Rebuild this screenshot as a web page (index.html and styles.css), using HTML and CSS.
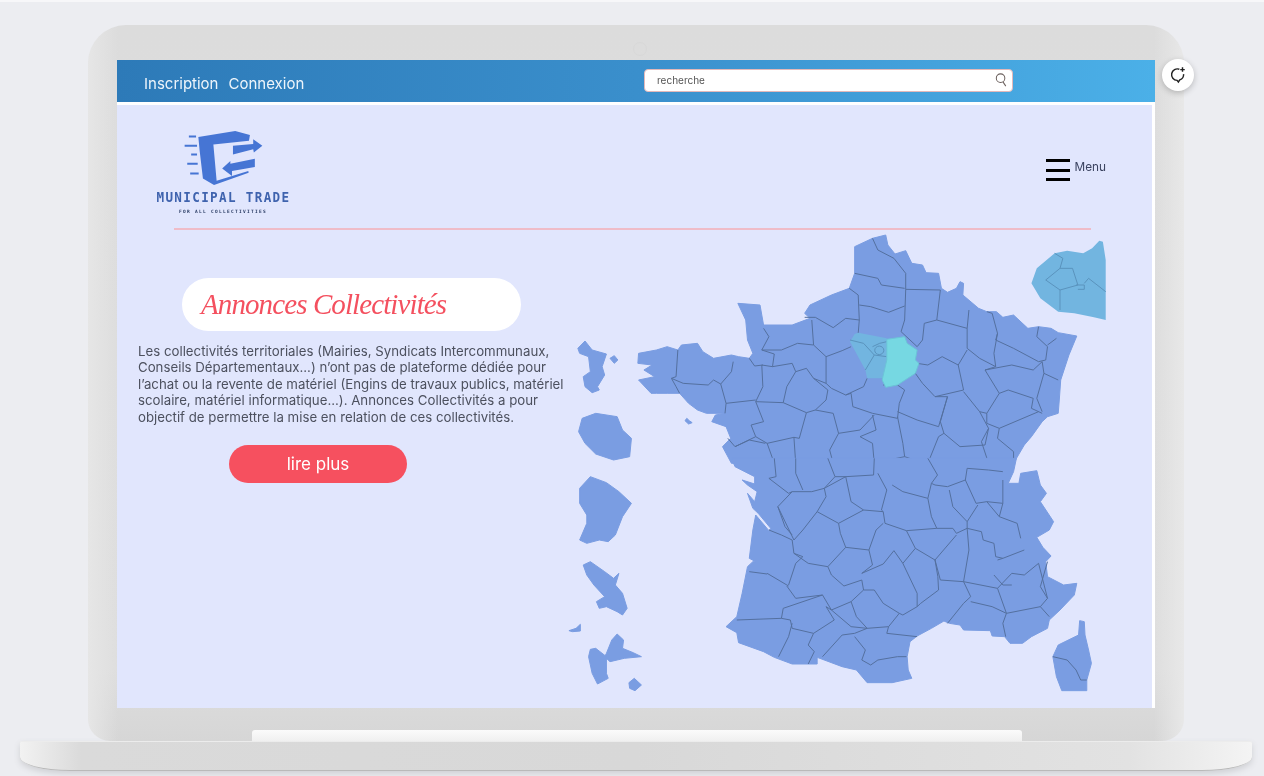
FILE: index.html
```html
<!DOCTYPE html>
<html lang="fr">
<head>
<meta charset="utf-8">
<title>Annonces Collectivités</title>
<link rel="stylesheet" href="styles.css">
</head>
<body>
<div class="lid">
  <span class="camera"></span>
  <div class="screen">
    <header class="topbar">
      <nav class="auth"><a>Inscription</a><a>Connexion</a></nav>
      <div class="search">
        <span>recherche</span>
        <svg class="search-icon" viewBox="0 0 14 16"><circle cx="6" cy="6" r="4.6"/><path d="M8.6 10l3 4.6"/></svg>
      </div>
    </header>
    <main class="page">
      <div class="brandrow">
        <div class="logo">
          <svg class="logo-icon" viewBox="185 235 245 172">
            <path class="logo-fill" d="M232 258L345 240L390 252L387 270L278 281L288 392L385 362L386 368L280 405L246 385L236 300Z"/>
            <path class="logo-fill" d="M338 285L400 280L400 265L428 285L402 306L400 296L338 312Z"/>
            <path class="logo-fill" d="M405 325L405 350L335 362L335 378L305 355L330 332L330 340Z"/>
            <path class="logo-lines" d="M203 257H225M190 285H228M210 312H228M198 340H230M207 370H233"/>
          </svg>
          <div class="logo-name">MUNICIPAL TRADE</div>
          <div class="logo-sub">FOR ALL COLLECTIVITIES</div>
        </div>
        <div class="menu">
          <span class="burger"><i></i><i></i><i></i></span>
          <span class="menu-label">Menu</span>
        </div>
      </div>
      <div class="rule"></div>
      <div class="content">
        <section class="intro">
          <h1 class="title">Annonces Collectivités</h1>
          <p class="text">Les collectivités territoriales (Mairies, Syndicats Intercommunaux,<br>Conseils Départementaux...) n’ont pas de plateforme dédiée pour<br>l’achat ou la revente de matériel (Engins de travaux publics, matériel<br>scolaire, matériel informatique...). Annonces Collectivités a pour<br>objectif de permettre la mise en relation de ces collectivités.</p>
          <a class="more">lire plus</a>
        </section>
        <svg class="map" viewBox="0 0 1568 1434" preserveAspectRatio="none">
          <!-- north half, traced in crop coordinates -->
          <path class="dep" d="M875 25L912 15L918 45L938 72L968 62L985 100L1015 105L1025 128L1060 130L1068 175L1085 187L1110 175L1120 155L1130 160L1128 195L1172 235L1195 245L1222 245L1240 262L1270 255L1310 295L1340 290L1375 295L1395 308L1447 318L1425 375L1402 450L1398 510L1395 550L1365 560L1350 575L1320 620L1300 645L1270 700L480 700L455 650L478 625L465 590L425 575L435 555L462 550L410 550L385 540L360 520L335 490L300 490L270 490L255 490L220 450L265 440L235 420L258 405L218 400L220 370L270 360L300 350L330 360L340 345L385 340L400 365L430 385L480 375L500 380L530 385L540 370L525 330L520 270L498 220L560 225L570 285L650 285L700 265L685 250L700 225L760 195L810 175L825 130L825 50Z"/>
          <path class="dep" d="M355 565L362 572L370 578L360 582L350 572Z"/>
          <path class="dep" d="M50 355L70 333L90 360L130 372L118 410L125 435L105 470L110 480L90 488L70 470L65 440L85 425L80 380L55 370Z"/>
          <path class="dep" d="M140 385L152 377L162 390L152 400Z"/>
          <path class="dep" d="M62 565L100 550L160 560L175 600L200 625L195 680L150 690L100 672L70 640L52 605Z"/>
          <path class="borders" d="M875 25L890 60L935 85L968 130L968 178L965 270L955 305L1000 350M825 130L890 145L900 165L965 175M838 225L870 230L920 247L965 228M810 175L835 195L838 270L835 310M968 178L1065 180L1055 270L1020 280L1015 330L1000 350M685 262L715 262L765 293L800 265L838 270M705 270L710 345L745 380L790 362L815 350M570 295L585 320L565 360L620 360L665 340L710 345M565 360L600 372L595 410L650 400L660 425L690 415L710 445L745 460L745 380M595 410L565 405L568 470L548 515M530 385L545 408L568 405M485 395L480 425L450 462L465 520L548 510M330 360L325 440L312 445L345 460L415 465L430 450L450 462M312 445L325 470L335 490M465 520L462 550M548 515L570 575L535 585L548 620L490 650L470 625M548 515L625 518L690 548L670 625L655 622L580 640L548 620M660 425L635 470L625 518M710 445L750 480L745 510L715 540L690 548M745 460L760 475L800 495L850 470L860 445M800 495L815 490L820 530L875 550L945 565L950 520L965 480L945 465L905 465M715 540L765 550L780 610L840 600L880 555M1055 270L1140 295L1145 240M1140 295L1140 355L1175 385L1220 410L1215 370L1225 310L1210 250L1195 245M1000 400L1030 405L1070 380L1115 405L1140 360M995 430L1015 460L1050 500L1130 480L1115 405M945 545L1000 570L1060 590L1085 500L1050 500M1130 485L1175 545L1195 550L1230 490L1190 420L1220 410M1225 310L1220 330L1270 355L1340 395L1360 390L1365 350L1335 320L1340 290M1365 345L1390 325M1190 420L1265 405L1325 420L1350 395L1355 430L1395 450M1355 430L1335 505L1350 545M1230 490L1255 480L1325 505L1320 535L1350 550M1085 500L1065 575L1075 610L1120 650L1190 645L1200 595L1175 545M1195 550L1195 580L1230 595L1340 545M1200 595L1180 635L1200 700M1230 595L1225 625L1270 665L1270 690M945 560L960 640L965 680L1020 700M1060 620L1075 610M1060 620L1030 700M875 555L885 600L840 620L875 640L880 700M880 700L920 690L965 680M780 610L755 660L765 700M655 622L660 700M580 640L600 700M490 650L530 630L575 640"/>
          <path class="idf" d="M825 312L835 308L915 325L915 390L905 445L860 445L855 420L812 335Z"/>
          <path class="idf-border" d="M812 330L850 340L880 375L855 420M880 375L915 380M875 350L895 340L915 335M885 352A9 9 0 1 0 903 370A9 9 0 1 0 885 352Z"/>
          <path class="idf-east" d="M915 328L965 320L972 340L1000 360L995 390L1005 400L995 430L945 465L912 472L902 450L915 390Z"/>
          <!-- inset of Paris and its suburbs -->
          <path class="idf" d="M1510 32L1520 35L1528 90L1528 270L1495 262L1440 250L1395 245L1345 205L1320 160L1335 115L1385 70L1420 62L1465 70L1490 55Z"/>
          <path class="idf-border" d="M1385 70L1408 85L1400 115L1360 150L1400 180L1400 240M1400 115L1435 115L1450 165L1400 180M1445 165L1468 165L1468 178L1450 178M1468 160L1480 145L1528 185"/>
          <!-- south half -->
          <g transform="translate(0 690)">
            <path class="dep" d="M480 -5L1278 -5L1270 35L1255 70L1285 70L1290 40L1335 32L1345 75L1362 100L1345 125L1382 185L1370 210L1335 232L1352 262L1375 288L1360 305L1365 350L1410 375L1447 370L1440 405L1400 450L1370 480L1365 505L1320 530L1295 550L1260 550L1245 530L1210 528L1205 512L1130 510L1120 495L1090 490L1075 483L1040 505L1000 528L980 545L972 590L975 630L985 655L930 668L860 668L830 630L790 620L720 592L720 612L650 612L600 592L570 575L500 548L495 518L465 500L495 470L510 400L525 320L540 305L548 305L530 295L540 210L548 165L585 212L590 205L555 160L540 145L525 100L545 125L552 95L525 75L510 60L545 72L545 50L490 20Z"/>
            <path class="dep" d="M85 50L130 68L165 95L200 130L175 170L155 225L135 245L110 240L75 250L55 240L75 190L75 165L55 130L55 85Z"/>
            <path class="dep" d="M65 315L85 305L125 335L150 355L165 340L155 375L175 400L188 445L175 465L160 455L130 440L110 445L102 425L125 410L95 375L75 345Z"/>
            <path class="dep" d="M25 512L45 505L57 493L57 513L35 515Z"/>
            <path class="dep" d="M145 540L160 522L178 540L175 565L205 578L228 590L180 595L140 605L125 590L130 580Z"/>
            <path class="dep" d="M85 568L100 565L130 590L130 640L135 655L105 672L90 640L80 590Z"/>
            <path class="dep" d="M193 668L208 655L228 675L210 692L195 685Z"/>
            <path class="dep" d="M1455 482L1468 485L1470 525L1480 570L1488 610L1475 660L1475 692L1405 692L1390 650L1380 590L1395 555L1452 525Z"/>
            <path class="borders" d="M1380 590L1420 600L1445 630L1458 660L1475 660M600 -5L605 50L585 55L640 100L650 95L705 95L740 85L770 50L750 -5M660 -5L660 40L680 90M880 -5L878 45L800 50L770 50M1030 -5L1057 45L1040 70L1050 75L1085 80L1135 60L1140 25L1200 30L1240 35M1240 60L1240 130L1195 125L1165 130L1135 60M890 40L915 90L900 150L905 155L850 150L780 190L720 155L745 110L740 85L800 50L815 125L850 150M930 75L960 95L1030 115L1040 170L1055 205L970 212L910 190L905 155M1030 115L1040 70M1090 90L1100 140L1140 185L1170 135M1195 125L1230 170L1280 190L1290 235M1240 130L1230 170M1140 185L1140 205L1180 215L1185 240L1215 250L1220 290L1240 295L1300 270M1055 205L1100 205L1110 220L1140 205M970 212L995 265L1050 300L1110 225M1050 300L1065 360M1140 205L1145 270L1130 365M585 210L620 225L650 240L655 280L680 290L660 310L640 375M720 155L680 210L655 240L610 140L650 95M610 140L630 200L650 225M655 280L695 310L750 320L800 262L785 220L780 190M800 262L865 270L885 210L905 190M865 270L875 315L845 340M750 320L760 345L795 378L845 360L850 390L815 425L760 450L735 405L660 415L635 378M845 340L905 312L935 272L960 310L995 265M960 310L1000 400L1000 440L1010 430L1060 390L1058 350L1050 300M1065 360L1130 365L1150 410L1130 430L1085 490M1130 365L1225 385L1250 460L1210 440L1150 425M1225 385L1265 340L1300 345L1340 310L1365 415L1345 440L1250 460M1215 345L1240 375L1265 375M1225 300L1240 295M1345 440L1370 470M1250 460L1240 490L1248 530M1365 305L1345 380L1365 415M815 425L830 470L860 505L920 500L950 460L905 430L880 390L850 390M920 500L915 520L1000 530M1000 440L960 465L950 460M625 445L735 405M625 445L620 475L645 480L650 505L710 520L768 480L745 440L760 450M495 480L620 475M650 490L640 530L612 590M710 520L695 555L712 575L695 612M760 450L815 500L860 505M860 505L825 520L790 525L735 590M825 530L855 570L845 600L870 615L890 600L945 590L970 590M580 340L640 378M530 335L580 342"/>
          </g>
        </svg>
      </div>
    </main>
  </div>
  <div class="hinge"></div>
</div>
<div class="base"></div>
<button class="chat" aria-label="chat">
  <svg viewBox="0 0 20 20"><path d="M11.5 3.6A6.4 6.4 0 1 0 9 16l1.4 1.8L12 15.4A6.4 6.4 0 0 0 16.2 9"/><path d="M15 1.5v5M12.5 4h5"/></svg>
</button>
</body>
</html>
```
FILE: styles.css
```css
* { box-sizing: border-box; }
html, body { margin: 0; height: 776px; overflow: hidden; }
body {
  background: #ecedf1;
  border-top: 2px solid #f7f7f9;
  font-family: Inter, "Open Sans", sans-serif;
  position: relative;
}
.lid {
  margin: 23px 0 0 88px;
  width: 1096px;
  height: 716px;
  padding: 35px 29px 0;
  background:
    linear-gradient(90deg, #e6e6e6 0, rgba(230, 230, 230, 0) 30px, rgba(230, 230, 230, 0) 1066px, #e8e8e8 100%),
    linear-gradient(180deg, #dcdcdc 0%, #dedede 90%, #d6d6d6 100%);
  border-radius: 38px 38px 22px 22px;
  position: relative;
}
.camera {
  position: absolute;
  left: 545px;
  top: 17px;
  width: 14px;
  height: 14px;
  border-radius: 50%;
  border: 1px solid #d8d8d8;
}
.screen {
  width: 1038px;
  height: 648px;
  display: flex;
  flex-direction: column;
  background: #fff;
  filter: blur(.35px);
}
.topbar {
  height: 42px;
  flex: none;
  padding-left: 27px;
  display: grid;
  grid-template-columns: 500px 369px;
  align-items: center;
  background: linear-gradient(90deg, #2d7ab8 0%, #3a8fcc 50%, #4bb0e8 100%);
}
.auth { display: flex; gap: 10px; color: #eef5fb; font-size: 15px; padding-top: 5px; }
.search {
  height: 23px;
  margin-top: -2px;
  background: #fff;
  border: 1px solid #e3b9ba;
  border-radius: 4px;
  padding: 0 4px 0 12px;
  display: flex;
  align-items: center;
  justify-content: space-between;
  font-size: 10px;
  color: #555;
}
.search-icon { width: 13px; height: 16px; fill: none; stroke: #6a5f5c; stroke-width: 1.1; }
.page {
  flex: 1;
  margin: 3px 3px 0 0;
  background: #e1e6fd;
  display: flex;
  flex-direction: column;
  min-height: 0;
}
.brandrow {
  height: 123px;
  flex: none;
  padding: 24px 46px 0 39px;
  display: flex;
  justify-content: space-between;
  align-items: flex-start;
}
.logo { width: 134px; display: flex; flex-direction: column; align-items: center; }
.logo-icon { width: 80px; height: 57px; display: block; }
.logo-fill { fill: #4675d4; }
.logo-lines { fill: none; stroke: #4675d4; stroke-width: 6; }
.logo-name {
  margin-top: 4px;
  font: bold 14px/14px "DejaVu Sans Mono", monospace;
  transform: scaleX(.9);
  letter-spacing: 1.5px;
  white-space: nowrap;
  color: #3f63ae;
}
.logo-sub {
  margin-top: 5px;
  font: bold 4.5px/6px "DejaVu Sans Mono", monospace;
  letter-spacing: 1.3px;
  white-space: nowrap;
  color: #24365f;
}
.menu { display: flex; gap: 5px; margin-top: 30px; }
.burger { width: 24px; display: flex; flex-direction: column; gap: 6.5px; }
.burger i { display: block; height: 3px; background: #000; }
.menu-label { font-size: 11.8px; line-height: 16px; color: #3b4360; }
.rule { height: 2px; flex: none; margin: 0 61px 0 57px; background: #efbcc8; }
.content { flex: 1; display: flex; min-height: 0; }
.intro { width: 443px; flex: none; padding-top: 48px; }
.title {
  margin: 0 0 0 65px;
  width: 339px;
  height: 53px;
  padding-left: 19px;
  border-radius: 27px;
  background: #fff;
  color: #f4505f;
  font: italic 400 29px/53px "Liberation Serif", serif;
  letter-spacing: -.9px;
}
.text {
  margin: 12px 0 0 21px;
  font-size: 13.25px;
  line-height: 16.4px;
  color: #4c505e;
  white-space: nowrap;
}
.more {
  display: block;
  margin: 20px 0 0 112px;
  width: 178px;
  height: 38px;
  border-radius: 19px;
  background: #f6505f;
  color: #fff;
  font-size: 17px;
  line-height: 38px;
  text-align: center;
}
.map { width: 560px; height: 478px; flex: none; display: block; }
.dep { fill: #7a9de2; stroke: #7a9de2; stroke-width: 1; stroke-linejoin: round; vector-effect: non-scaling-stroke; }
.idf { fill: #72b5e0; }
.idf-east { fill: #76d8e2; stroke: #6cc4d8; stroke-width: 1; vector-effect: non-scaling-stroke; }
.borders, .idf-border {
  fill: none;
  stroke: #54709f;
  stroke-width: 1;
  vector-effect: non-scaling-stroke;
  stroke-linejoin: round;
}
.idf-border { stroke: #5a93bd; }
.hinge {
  margin: 22px 0 0 135px;
  width: 770px;
  height: 11px;
  border-radius: 3px 3px 0 0;
  background: linear-gradient(180deg, #fbfbfb, #f0f0f0);
}
.base {
  margin-left: 20px;
  width: 1232px;
  height: 30px;
  background: linear-gradient(90deg, #f2f2f2 0%, #dadada 5%, #d8d8d8 50%, #e2e2e2 90%, #f4f4f4 100%);
  border-top: 1px solid #ececec;
  border-bottom: 1px solid #b9b9b9;
  border-radius: 2px 2px 50px 50px / 2px 2px 14px 14px;
  box-shadow: 0 3px 6px #cfd0d4;
}
.chat {
  position: absolute;
  left: 1162px;
  top: 57px;
  width: 32px;
  height: 32px;
  padding: 7px;
  border: 0;
  border-radius: 50%;
  background: #fff;
  box-shadow: 0 2px 6px rgba(0, 0, 0, .22);
}
.chat svg { display: block; width: 18px; height: 18px; fill: none; stroke: #222; stroke-width: 1.6; }
```
